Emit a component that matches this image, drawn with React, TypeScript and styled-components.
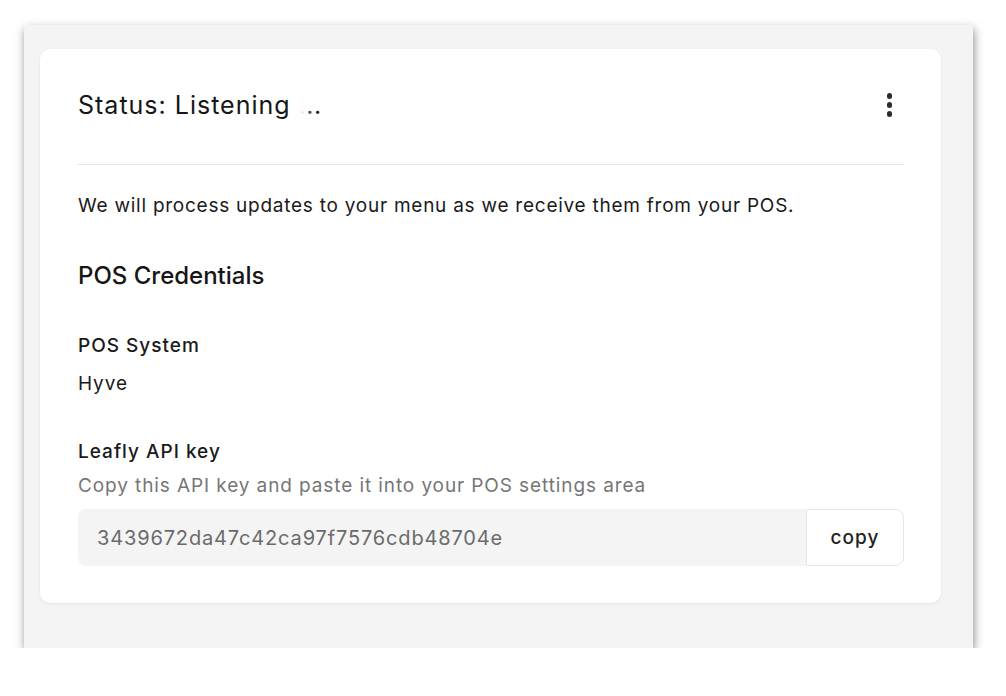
import styled, { createGlobalStyle } from "styled-components";

const GlobalStyle = createGlobalStyle`
  body {
    margin: 0;
    background: #ffffff;
    font-family: "Inter", "Noto Sans", sans-serif;
    color: #1a1a1a;
  }
`;

const Panel = styled.div`
  margin: 25px 33px 0 24px;
  padding: 24px 32px 45px 16px;
  background: #f4f4f4;
  box-shadow: 1px 4px 9px rgba(0, 0, 0, 0.45);
`;

const Card = styled.section`
  background: #ffffff;
  border-radius: 10px;
  box-shadow: 0 1px 3px rgba(0, 0, 0, 0.08);
  padding: 40px 37px 37px 38px;
`;

const Header = styled.div`
  display: flex;
  align-items: center;
  justify-content: space-between;
  padding-bottom: 43px;
  border-bottom: 1px solid #e2e4e8;
`;

const Title = styled.h2`
  margin: 0;
  font-size: 25px;
  line-height: 32px;
  font-weight: 400;
  letter-spacing: 1px;
  color: #161616;
`;

const Dot = styled.span<{ $tone: string }>`
  color: ${(p) => p.$tone};
  letter-spacing: 0.5px;
`;

const Kebab = styled.button`
  display: flex;
  flex-direction: column;
  gap: 3.5px;
  padding: 0;
  margin-right: 12px;
  border: none;
  background: none;
  cursor: pointer;
`;

const KebabDot = styled.span`
  width: 5.5px;
  height: 5.5px;
  border-radius: 50%;
  background: #2b2b2b;
`;

const Body = styled.p`
  margin: 27px 0 0;
  font-size: 19px;
  line-height: 28px;
  letter-spacing: 0.75px;
  color: #1a1a1a;
`;

const SectionTitle = styled.h3`
  margin: 40px 0 0;
  font-size: 24px;
  line-height: 32px;
  font-weight: 500;
  color: #161616;
`;

const Field = styled.div`
  margin-top: 40px;
`;

const Label = styled.div`
  font-size: 19px;
  line-height: 28px;
  font-weight: 500;
  letter-spacing: 1px;
  color: #1a1a1a;
`;

const Value = styled.div`
  margin-top: 10px;
  font-size: 19px;
  line-height: 28px;
  letter-spacing: 0.9px;
  color: #1a1a1a;
`;

const Hint = styled.div`
  margin-top: 6px;
  font-size: 19px;
  line-height: 28px;
  letter-spacing: 0.9px;
  color: #767676;
`;

const KeyRow = styled.div`
  display: flex;
  margin-top: 9px;
  height: 57px;
`;

const KeyBox = styled.div`
  flex: 1;
  display: flex;
  align-items: center;
  padding: 0 19px;
  background: #f4f4f4;
  border-radius: 7px 0 0 7px;
  font-size: 20px;
  letter-spacing: 0.85px;
  color: #6b6b6b;
`;

const CopyButton = styled.button`
  width: 98px;
  border: 1px solid #e6e6e6;
  border-radius: 0 8px 8px 0;
  background: #ffffff;
  font-family: inherit;
  font-size: 19px;
  font-weight: 500;
  letter-spacing: 1px;
  color: #222;
  cursor: pointer;
`;

export default function App() {
  return (
    <>
      <GlobalStyle />
      <Panel>
        <Card>
          <Header>
            <Title>
              Status: Listening{" "}
              <Dot $tone="#ececec">.</Dot>
              <Dot $tone="#555">.</Dot>
              <Dot $tone="#222">.</Dot>
            </Title>
            <Kebab aria-label="More options">
              <KebabDot />
              <KebabDot />
              <KebabDot />
            </Kebab>
          </Header>
          <Body>We will process updates to your menu as we receive them from your POS.</Body>
          <SectionTitle>POS Credentials</SectionTitle>
          <Field>
            <Label>POS System</Label>
            <Value>Hyve</Value>
          </Field>
          <Field>
            <Label>Leafly API key</Label>
            <Hint>Copy this API key and paste it into your POS settings area</Hint>
            <KeyRow>
              <KeyBox>3439672da47c42ca97f7576cdb48704e</KeyBox>
              <CopyButton>copy</CopyButton>
            </KeyRow>
          </Field>
        </Card>
      </Panel>
    </>
  );
}
